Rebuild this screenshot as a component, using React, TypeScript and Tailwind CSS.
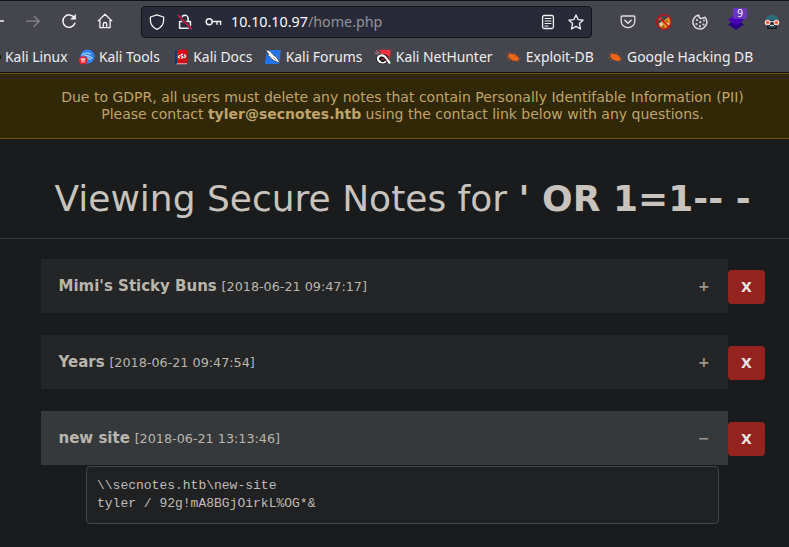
import React from 'react';

type Note = { title: string; date: string; body?: string };

const notes: Note[] = [
  { title: "Mimi's Sticky Buns", date: '[2018-06-21 09:47:17]' },
  { title: 'Years', date: '[2018-06-21 09:47:54]' },
  {
    title: 'new site',
    date: '[2018-06-21 13:13:46]',
    body: '\\\\secnotes.htb\\new-site\ntyler / 92g!mA8BGjOirkL%OG*&',
  },
];

const line = {
  fill: 'none',
  stroke: '#f4f3f6',
  strokeWidth: 1.3,
  strokeLinecap: 'round' as const,
  strokeLinejoin: 'round' as const,
};

function BackArrow() {
  return (
    <svg className="h-4 w-4" viewBox="0 0 16 16" {...line}>
      <path d="M14.5 8H2M7 2.5 1.5 8 7 13.5" />
    </svg>
  );
}

function ForwardArrow() {
  return (
    <svg className="h-4 w-4" viewBox="0 0 16 16" {...line} stroke="#87868c">
      <path d="M1.6 8.2h12.6M9.2 3.2l5 5-5 5" />
    </svg>
  );
}

function Reload() {
  return (
    <svg className="h-4 w-4" viewBox="0 0 16 16" {...line} strokeWidth={1.5}>
      <path d="M13.9 10.2a6.2 6.2 0 1 1-.6-5.5" />
      <path d="M14.6 1.6v4.6H10Z" fill="#f4f3f6" strokeWidth={0.6} />
    </svg>
  );
}

function Home() {
  return (
    <svg className="h-4 w-4" viewBox="0 0 16 16" {...line}>
      <path d="M1.2 7.9 8 1.3l6.8 6.6M2.9 6.6v8h10.2v-8" />
      <path d="M6.3 14.4v-3.2a1.7 1.7 0 0 1 3.4 0v3.2" />
    </svg>
  );
}

function Shield() {
  return (
    <svg className="h-4 w-4" viewBox="0 0 16 16" {...line}>
      <path d="M8 .9 14.6 3v3.2c0 4.2-2.2 7.2-6.6 9.1-4.4-1.9-6.6-4.9-6.6-9.1V3Z" />
    </svg>
  );
}

function InsecureLock() {
  return (
    <svg className="h-4 w-4" viewBox="0 0 16 16" {...line} strokeWidth={1.5}>
      <path d="M4.9 6.8V4.4a3.1 3.1 0 0 1 6.2 0v2.4M2.6 7.4v6.8h10.8V7.4Z" />
      <path d="M1.4 1.4 14.5 15" stroke="#292a37" strokeWidth={3} />
      <path d="M1.4 1.4 14.5 15" stroke="#e2164c" />
    </svg>
  );
}

function KeyIcon() {
  return (
    <svg className="h-4 w-[17px]" viewBox="0 0 17 16" {...line} strokeWidth={1.4}>
      <circle cx="4.2" cy="7.8" r="3" />
      <path d="M7.4 7.5h8.4M12 7.7v2.5M15.6 7.7v2.8" />
    </svg>
  );
}

function Reader() {
  return (
    <svg className="h-4 w-4" viewBox="0 0 16 16" {...line}>
      <rect x="2.6" y="1.5" width="10.8" height="13" rx="1.5" />
      <path d="M5 4.5h6M5 7h6M5 9.5h6M5 12h3" strokeWidth={1.1} />
    </svg>
  );
}

function Star() {
  return (
    <svg className="h-4 w-4" viewBox="0 0 16 16" {...line}>
      <path d="m8 .9 2.1 4.7 5.1.5-3.8 3.5 1.1 5.4L8 12.4 3.5 15l1.1-5.4L.8 6.1l5.1-.5Z" />
    </svg>
  );
}

function Pocket() {
  return (
    <svg className="h-4 w-4" viewBox="0 0 16 16" {...line} stroke="#e2e1e6">
      <path d="M2.2 2h11.6a1 1 0 0 1 1 1v4.6a6.8 6 0 0 1-13.6 0V3a1 1 0 0 1 1-1Z" />
      <path d="m4.9 6.2 3.1 3 3.1-3" strokeWidth={1.5} />
    </svg>
  );
}

function BlockedFox() {
  return (
    <svg className="h-4 w-4" viewBox="0 0 16 16">
      <path d="M3 10 5 7.5 8 6.5 10 5 13 2.5l1.2 4L14.5 10 11 13.5 7.500 15l-4-2.500Z" fill="#e58a1f" />
      <path d="M2.5 3.5 5 3l1.5 2.5L3 6Z" fill="#b98a6c" />
      <path d="M3 9.5 6 8.5l1 2-2 2ZM11 9l2.5.5-2 2.5Z" fill="#e4d3c3" />
      <path d="M7 11.5 9 13l-1.500 1.500L5.500 13ZM9.500 6.500h2V8h-2Z" fill="#9a5a1c" />
      <circle cx="8" cy="8" r="7.3" fill="none" stroke="#cf0b10" strokeWidth="1.2" />
      <path d="m3 3 10 10" stroke="#cf0b10" strokeWidth="1.2" />
    </svg>
  );
}

function Cookie() {
  return (
    <svg className="h-4 w-4" viewBox="0 0 16 16" {...line} stroke="#dddce0" strokeWidth={1.5}>
      <path d="M6.8 1.1a7 7 0 1 0 6.2 2.100M6.800 1.100c0 1.800.2 3.200 2 3.400 1.400.1 2.400-.6 4.200-1.300" />
      <g fill="#dddce0" stroke="none">
        <circle cx="5" cy="6" r="1.1" />
        <circle cx="8.3" cy="8.2" r="1.1" />
        <circle cx="4.5" cy="10" r="1.1" />
        <circle cx="7.9" cy="12.2" r="1.1" />
        <circle cx="11.5" cy="10.5" r="1.1" />
        <circle cx="12" cy="6.5" r="1" />
      </g>
    </svg>
  );
}

function Layers() {
  return (
    <span className="relative block h-4 w-4">
      <svg className="h-4 w-4" viewBox="0 0 16 16">
        <path d="m8 5.5 8 5L8 16l-8-5.500Z" fill="#240080" />
        <path d="m8 0 8 5.8-8 5.7L0 5.8Z" fill="#4a00b8" />
      </svg>
      <span className="absolute -top-[6px] left-[5px] flex h-[11px] w-[14px] items-center justify-center rounded-[2px] bg-[#6a35bd] font-['Noto_Sans'] text-[10px] leading-none text-white">
        9
      </span>
    </span>
  );
}

function HackerFace() {
  return (
    <svg className="h-4 w-4" viewBox="0 0 16 16">
      <path d="M2 7C2 3 4.500.8 8 .8S14 3 14 7Z" fill="#2d6b78" />
      <path d="M3 6.5h10V14l-1 1H4l-1-1Z" fill="#17181d" />
      <path d="M4.5 12.2h7v1.3h-7Z" fill="#2d6670" />
      <path d="M6 10.8h4v1H6Z" fill="#e8eef0" />
      <circle cx="3.6" cy="8.5" r="2.3" fill="#f1614f" stroke="#f5ded9" strokeWidth="1.1" />
      <circle cx="12.4" cy="8.5" r="2.3" fill="#f1614f" stroke="#f5ded9" strokeWidth="1.1" />
      <path d="M5.8 7.7h4.4" stroke="#f5ded9" />
    </svg>
  );
}

function ToolsIcon() {
  return (
    <svg className="h-4 w-4" viewBox="0 0 16 16">
      <circle cx="8.5" cy="7.5" r="7" fill="#2c80ef" />
      <path d="M2.5 6.5C5 3.500 8 3.300 12 5.300M5 6.500c3.500-.8 6 .5 8.500 3.200M9 7c-.5 2 .5 3 3 3.300" fill="none" stroke="#bcd8ff" strokeWidth="1.1" />
      <circle cx="4" cy="11.4" r="4.1" fill="#e8282f" />
      <path d="M1.8 10h4.4M3.1 10v3.4M5 10v3.4" fill="none" stroke="#fff" strokeWidth="1" />
    </svg>
  );
}

function DocsIcon() {
  return (
    <svg className="h-4 w-4" viewBox="0 0 16 16">
      <path d="M2 1h3v14H2Z" fill="#15356d" />
      <path d="M4 .8h10.500V13l-1 2H4Z" fill="#d30d10" />
      <path d="M4 14.2h10v1H3Z" fill="#e6b9ba" />
      <path d="M6.8 6 5.3 7.700l1.500 1.600M11.200 5.500l1.500 1.700-1.500 1.700M10 5.200c-2.500.3-2.500 1.700-1 2.200 1.700.5 1.300 1.800-.9 2" fill="none" stroke="#fff" strokeWidth="1.2" />
    </svg>
  );
}

function ForumsIcon() {
  return (
    <svg className="h-4 w-4" viewBox="0 0 16 16">
      <path d="M1.2 4.5 2.5 1h13.300L14.500 15H0Z" fill="#2375ed" />
      <path d="M.4.6c4 .6 6.500 3 8.300 5.700 3 .8 4.300 4.200 6.300 8L10.500 12.300C7.500 11 6 9.500 5 8L1.800 5.200l2 .2Z" fill="#fff" stroke="#17191f" strokeWidth=".6" />
      <path d="m8 8 3.5 3.5" stroke="#6d7078" strokeWidth=".6" />
    </svg>
  );
}

function NetHunterIcon() {
  return (
    <svg className="h-4 w-4" viewBox="0 0 16 16">
      <path d="M4 .8h11.800L14.300 13 7 6Z" fill="#f12f40" />
      <ellipse cx="7.500" cy="10" rx="6.500" ry="5" fill="#16171c" />
      <path d="M5 12.800C1.500 11 2.500 6.300 7 6.200c4 0 4.500 4.300 7.500 7.600" fill="none" stroke="#fff" strokeWidth="2.100" strokeLinecap="round" />
      <path d="M4.500 12.600c2 1.700 5 1.500 6.500-.3" fill="none" stroke="#fff" strokeWidth="1.700" />
      <path d="M6.500 10.300 9.500 10" stroke="#d63a48" strokeWidth="1.200" />
      <path d="M0 4 3 5M1 1.500l3.500 3" stroke="#e78a94" strokeWidth=".9" />
    </svg>
  );
}

function ExploitIcon() {
  return (
    <svg className="h-4 w-4" viewBox="0 0 16 16">
      <ellipse cx="8.5" cy="8.3" rx="5.6" ry="3" transform="rotate(26 8.5 8.3)" fill="#f26415" />
      <path d="M3.5 6l-2-1.500M5 5l-.5-2M8.500 5.500l1.700-2.200M11 7.500l2.500-.7M3.500 8l-2.500.8M5.500 10 3 11M8.500 11l-1.500 1.500M12 11l1.500 2.500M13 10l2 .5" stroke="#b9561f" strokeWidth=".8" />
    </svg>
  );
}

const bookmarks = [
  { label: 'Kali Tools', icon: <ToolsIcon /> },
  { label: 'Kali Docs', icon: <DocsIcon /> },
  { label: 'Kali Forums', icon: <ForumsIcon /> },
  { label: 'Kali NetHunter', icon: <NetHunterIcon /> },
  { label: 'Exploit-DB', icon: <ExploitIcon /> },
  { label: 'Google Hacking DB', icon: <ExploitIcon /> },
];

function Toolbar() {
  return (
    <header className="h-[73px] border-t border-b border-[#121319] bg-[#45464d] font-['Noto_Sans',sans-serif] whitespace-nowrap text-[#fbfbfe]">
      <nav className="flex h-10 items-center">
        <div className="-ml-[11px] flex items-center gap-5">
          <BackArrow />
          <ForwardArrow />
          <Reload />
          <Home />
        </div>
        <div className="mt-px ml-[28px] flex h-8 w-[451px] items-center rounded-[4px] border border-[#121319] bg-[#292a37] pl-[7px]">
          <div className="flex items-center gap-3">
            <Shield />
            <InsecureLock />
            <KeyIcon />
          </div>
          <span className="ml-[9px] text-[14.3px] leading-5">
            10.10.10.97<span className="text-[#93939a]">/home.php</span>
          </span>
          <div className="mr-[7px] ml-auto flex gap-3">
            <Reader />
            <Star />
          </div>
        </div>
        <div className="mt-px ml-7 flex gap-5">
          <Pocket />
          <BlockedFox />
          <Cookie />
          <Layers />
          <HackerFace />
        </div>
      </nav>
      <div className="flex h-[31px] items-center pt-px text-[13.9px] leading-5 text-[#eeeef2]">
        <span className="-ml-px h-1 w-1.5 border-l-2 border-[#121319]" />
        <span className="w-[62px]">Kali Linux</span>
        <div className="ml-[11.5px] flex gap-[13px]">
          {bookmarks.map((b) => (
            <div key={b.label} className="flex items-center gap-[4.4px]">
              {b.icon}
              <span>{b.label}</span>
            </div>
          ))}
        </div>
      </div>
    </header>
  );
}

function NoteRow({ note }: { note: Note }) {
  const open = note.body !== undefined;
  return (
    <section>
      <div className="flex h-[54px] items-center">
        <button
          className={`flex h-full w-[687px] items-center pr-[17px] pl-[17.5px] text-left text-[15px] text-[#bab5ab] ${open ? 'bg-[#36393c]' : 'bg-[#242527]'}`}
        >
          <span className="leading-5">
            <b>{note.title}</b> <span className="text-[12.75px]">{note.date}</span>
          </span>
          <span className="ml-auto w-[13px] text-[14px] font-bold text-[#9e978b]">{open ? '\u2212' : '+'}</span>
        </button>
        <button className="mt-0.5 h-[34px] w-[37px] rounded-[4px] bg-[#942320] text-[14px] font-bold text-[#e8e6e3]">X</button>
      </div>
      {open && (
        <pre className="mt-px ml-[45px] h-[58px] w-[633px] rounded-[4px] border border-[#414548] bg-[#202123] px-2.5 py-2.5 font-['Liberation_Mono',monospace] text-[13px] leading-[18px] text-[#c1bcb4]">
          {note.body}
        </pre>
      )}
    </section>
  );
}

export default function App() {
  return (
    <div className="h-[547px] w-[789px] overflow-hidden bg-[#1a1b1c] font-['DejaVu_Sans',sans-serif] text-[#c8c3bc]">
      <Toolbar />
      <div className="h-[66px] border-y border-[#70520a] bg-[#302807] pt-[15px] pl-4 text-center text-[14px] leading-[17px] whitespace-nowrap text-[#c0a46b]">
        <p>Due to GDPR, all users must delete any notes that contain Personally Identifable Information (PII)</p>
        <p>
          Please contact <b>tyler@secnotes.htb</b> using the contact link below with any questions.
        </p>
      </div>
      <div className="flex h-[100px] justify-center border-b border-[#37393b] pt-10 pl-4">
        <h1 className="text-[36px] leading-10 whitespace-nowrap">
          Viewing Secure Notes for <b>' OR 1=1-- -</b>
        </h1>
      </div>
      <main className="flex flex-col gap-[22px] pt-5 pl-[41px]">
        {notes.map((n) => (
          <NoteRow key={n.title} note={n} />
        ))}
      </main>
    </div>
  );
}
